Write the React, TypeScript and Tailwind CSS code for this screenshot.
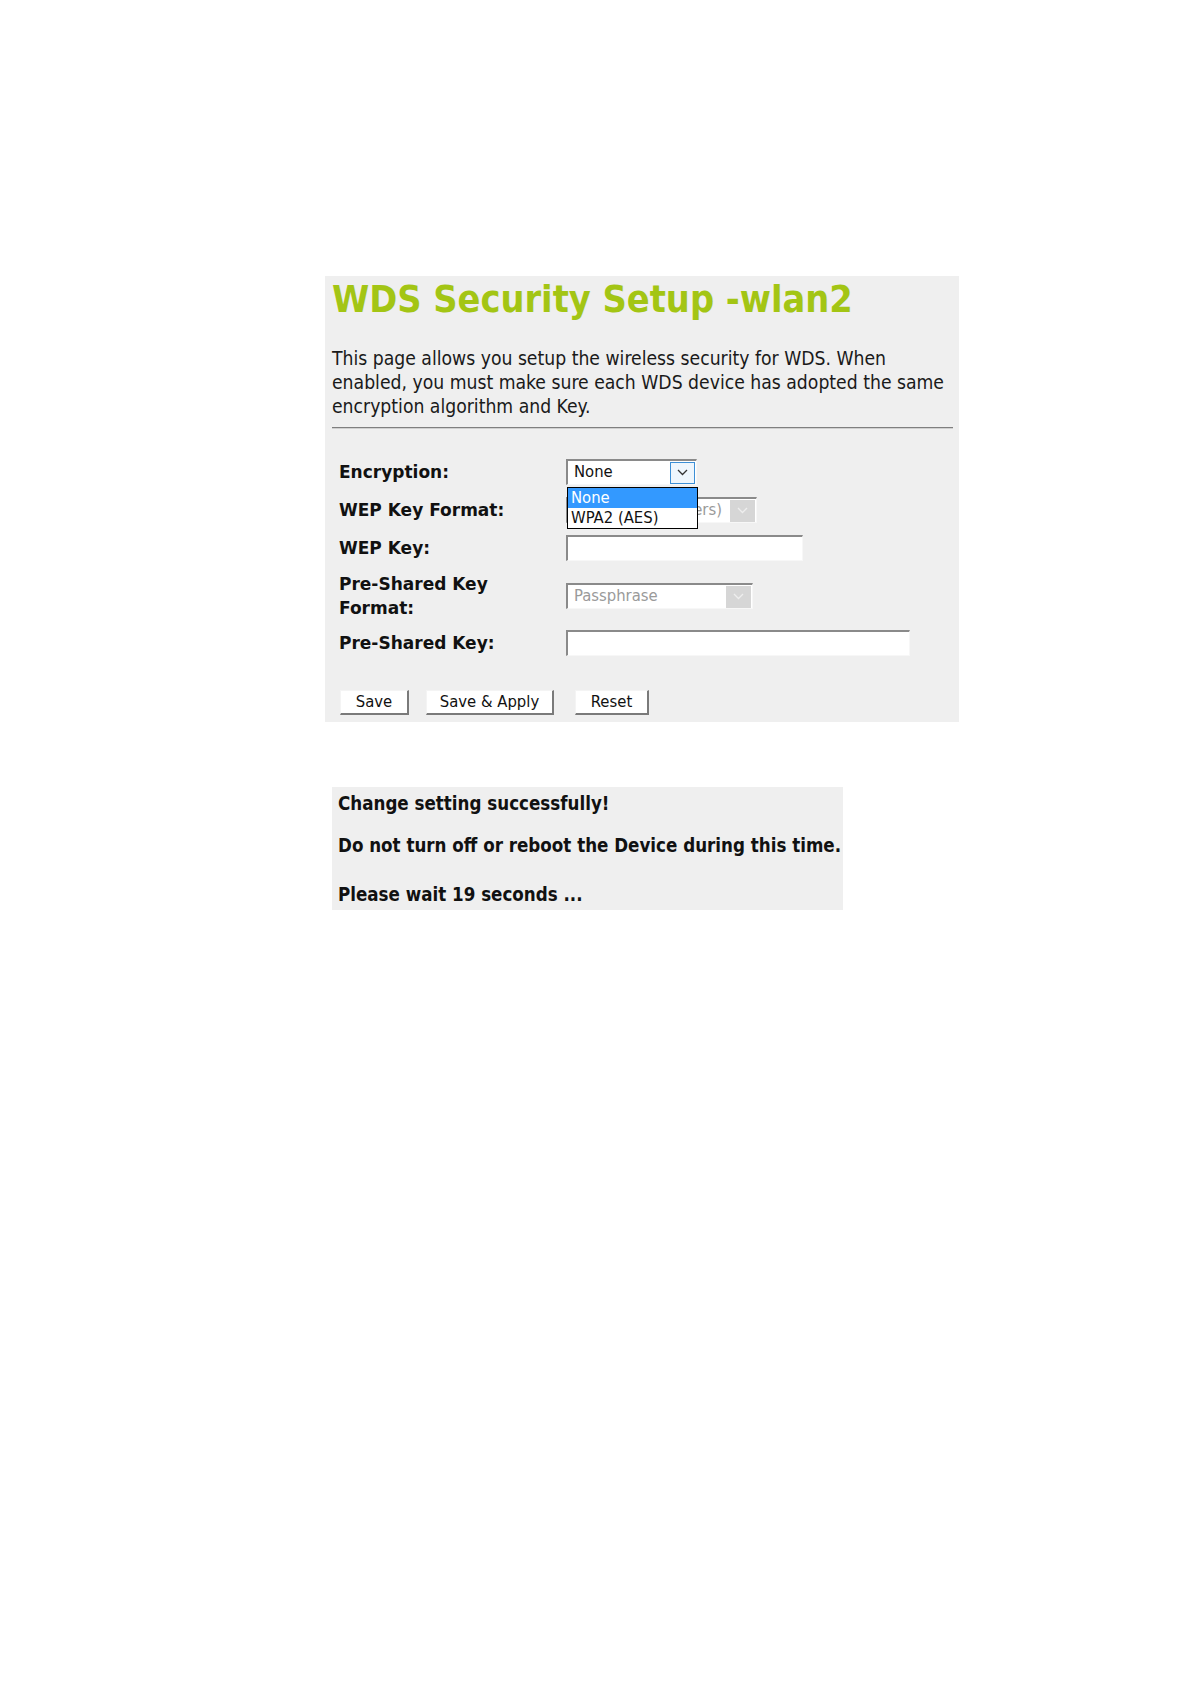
import React from "react";

const Chevron = ({ color }: { color: string }) => (
  <svg width="11" height="7" viewBox="0 0 11 7">
    <path d="M1 1l4.5 4.5L10 1" fill="none" stroke={color} strokeWidth="1.3" />
  </svg>
);

const inset =
  "border-t-2 border-l-2 border-r border-b border-t-[#8a8a8a] border-l-[#8a8a8a] border-r-[#f7f7f7] border-b-[#f7f7f7]";

const Select = ({
  value,
  width,
  active,
}: {
  value: string;
  width: string;
  active?: boolean;
}) => (
  <div className={`relative flex h-[26px] items-center bg-white ${inset} ${width}`}>
    <span
      className={`flex-1 overflow-hidden whitespace-nowrap pl-[6px] text-[16.5px] ${
        active ? "text-[#111]" : "text-[#9a9a9a]"
      }`}
    >
      {value}
    </span>
    <div
      className={`mr-[1px] flex h-[22px] w-[25px] items-center justify-center ${
        active ? "border border-[#3c8fd6] bg-[#eef6fd]" : "bg-[#d6d6d6]"
      }`}
    >
      <Chevron color={active ? "#333" : "#eeeeee"} />
    </div>
  </div>
);

const Input = ({ width }: { width: string }) => (
  <div className={`h-[26px] bg-white ${inset} ${width}`} />
);

const Button = ({ text, width }: { text: string; width: string }) => (
  <button
    className={`flex h-[25px] items-center justify-center border-l border-t border-r-2 border-b-2 border-l-[#f4f4f4] border-t-[#f4f4f4] border-r-[#7a7a7a] border-b-[#7a7a7a] bg-white text-[16.5px] text-[#111] ${width}`}
  >
    {text}
  </button>
);

const rows = [
  { label: ["Encryption:"], h: "h-[38px]" },
  { label: ["WEP Key Format:"], h: "h-[38px]" },
  { label: ["WEP Key:"], h: "h-[38px]" },
  { label: ["Pre-Shared Key", "Format:"], h: "h-[58px]" },
  { label: ["Pre-Shared Key:"], h: "h-[36px]" },
];

export default function App() {
  const controls = [
    <div className="relative">
      <Select value="None" width="w-[131px]" active />
      <div className="absolute left-[1px] top-[28px] z-10 w-[131px] border border-black bg-white text-[16.5px] leading-[20px]">
        <div className="bg-[#3399ff] pl-[3px] text-white">None</div>
        <div className="pl-[3px] text-[#111]">WPA2 (AES)</div>
      </div>
    </div>,
    <Select value="ASCII (5 characters)" width="w-[191px]" />,
    <Input width="w-[237px]" />,
    <Select value="Passphrase" width="w-[187px]" />,
    <Input width="w-[344px]" />,
  ];

  return (
    <div className="min-h-[1684px] bg-white pl-[325px] pt-[276px] font-['DejaVu_Sans',sans-serif] font-stretch-condensed">
      <div className="w-[634px] bg-[#efefef] pb-[7px]">
        <h1 className="pl-[7px] text-[37.5px] font-bold leading-[46px] text-[#a3c514]">
          WDS Security Setup -wlan2
        </h1>
        <p className="mt-[25px] pl-[7px] pr-[2px] text-[19.2px] leading-[24px] text-[#1a1a1a]">
          This page allows you setup the wireless security for WDS. When
          enabled, you must make sure each WDS device has adopted the same
          encryption algorithm and Key.
        </p>
        <div className="ml-[7px] mr-[6px] mt-[8px] h-[2px] border-t border-t-[#7f7f7f] border-b border-b-[#d0d0d0]" />
        <div className="mt-[24px] flex flex-col pl-[14px]">
          {rows.map((r, i) => (
            <div key={i} className={`flex items-center ${r.h}`}>
              <div className="w-[227px] font-['DejaVu_Sans',sans-serif] text-[17px] font-bold leading-[24px] font-stretch-normal text-[#111]">
                {r.label.map((l) => (
                  <div key={l}>{l}</div>
                ))}
              </div>
              {controls[i]}
            </div>
          ))}
        </div>
        <div className="mt-[29px] flex pl-[15px]">
          <Button text="Save" width="w-[69px]" />
          <div className="w-[17px]" />
          <Button text="Save & Apply" width="w-[128px]" />
          <div className="w-[21px]" />
          <Button text="Reset" width="w-[74px]" />
        </div>
      </div>
      <div className="ml-[7px] mt-[65px] w-[511px] bg-[#efefef] pb-[3px] pl-[6px] pt-[5px] font-['DejaVu_Sans',sans-serif] text-[18.6px] font-bold font-stretch-condensed leading-[24px] text-[#111]">
        <div>Change setting successfully!</div>
        <div className="mt-[18px]">Do not turn off or reboot the Device during this time.</div>
        <div className="mt-[25px]">Please wait 19 seconds ...</div>
      </div>
    </div>
  );
}
